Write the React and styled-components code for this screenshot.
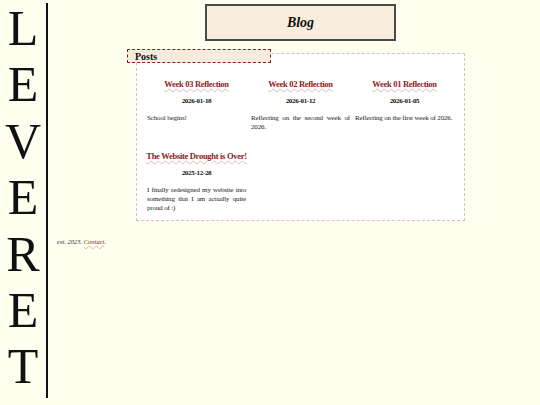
import React from "react";
import styled, { createGlobalStyle } from "styled-components";

const GlobalStyle = createGlobalStyle`
  html, body {
    margin: 0;
    padding: 0;
    background: #fffff0;
    font-family: "Liberation Serif", "Times New Roman", serif;
    color: #111;
  }
`;

const Page = styled.div`
  display: flex;
  align-items: flex-start;
  width: 540px;
  height: 405px;
  overflow: hidden;
`;

const Sidebar = styled.div`
  width: 46px;
  height: 395px;
  margin-top: 3px;
  border-right: 2px solid #111;
  display: flex;
  flex-direction: column;
  align-items: center;
`;

const Letters = styled.div`
  margin-top: -3px;
  display: flex;
  flex-direction: column;
  align-items: center;
`;

const Letter = styled.span`
  font-size: 50px;
  line-height: 56.4px;
  color: #111;
`;

const Main = styled.main`
  flex: 1;
  padding: 4px 0 0 9px;
  display: flex;
  flex-direction: column;
`;

const Column = styled.div`
  padding-left: 4px;
  display: flex;
  flex-direction: column;
  align-items: center;
`;

const Header = styled.header`
  box-sizing: border-box;
  width: 191px;
  height: 37px;
  background: #f8ecdc;
  border: 2px solid #4a4a4a;
  display: flex;
  align-items: center;
  justify-content: center;
`;

const HeaderTitle = styled.h1`
  margin: 0;
  font-size: 14px;
  font-weight: bold;
  font-style: italic;
`;

const PostsSection = styled.section`
  position: relative;
  box-sizing: border-box;
  width: 329px;
  margin-top: 12px;
  background: #fff;
  border: 1px dashed #dcc0c0;
  padding: 25px 9px 7px 10px;
`;

const Tag = styled.h2`
  position: absolute;
  top: -5px;
  left: -10px;
  box-sizing: border-box;
  width: 144px;
  height: 14px;
  margin: 0;
  padding-left: 7px;
  background: #f8ecdc;
  border: 1px dashed #8b2020;
  font-size: 10px;
  font-weight: bold;
  line-height: 13px;
`;

const Grid = styled.div`
  display: grid;
  grid-template-columns: repeat(3, 99px);
  column-gap: 5px;
  row-gap: 19px;
`;

const Post = styled.article`
  display: flex;
  flex-direction: column;
`;

const PostTitle = styled.a`
  align-self: center;
  font-size: 8.5px;
  line-height: 11px;
  font-weight: bold;
  letter-spacing: -0.3px;
  color: #8b1a1a;
  text-decoration: underline wavy rgba(180, 70, 70, 0.35);
  text-decoration-thickness: 1px;
  text-underline-offset: 1px;
  white-space: nowrap;
`;

const PostDate = styled.div`
  margin-top: 7px;
  text-align: center;
  font-size: 7px;
  line-height: 9px;
  font-weight: bold;
  letter-spacing: -0.3px;
`;

const PostBody = styled.p`
  margin: 8px 0 0;
  font-size: 7px;
  line-height: 9px;
  letter-spacing: -0.15px;
  text-align: justify;
  color: #222;
`;

const Footer = styled.footer`
  margin-top: 17px;
  font-size: 6.5px;
  font-style: italic;
  color: #333;
`;

const ContactLink = styled.a`
  color: #8b1a1a;
  text-decoration: underline wavy rgba(180, 70, 70, 0.35);
  text-decoration-thickness: 1px;
`;

const posts = [
  {
    title: "Week 03 Reflection",
    date: "2026-01-18",
    body: "School begins!",
  },
  {
    title: "Week 02 Reflection",
    date: "2026-01-12",
    body: "Reflecting on the second week of 2026.",
  },
  {
    title: "Week 01 Reflection",
    date: "2026-01-05",
    body: "Reflecting on the first week of 2026.",
  },
  {
    title: "The Website Drought is Over!",
    date: "2025-12-28",
    body: "I finally redesigned my website into something that I am actually quite proud of :)",
  },
];

function App() {
  return (
    <>
      <GlobalStyle />
      <Page>
        <Sidebar>
          <Letters>
            {"LEVERET".split("").map((ch, i) => (
              <Letter key={i}>{ch}</Letter>
            ))}
          </Letters>
        </Sidebar>
        <Main>
          <Column>
            <Header>
              <HeaderTitle>Blog</HeaderTitle>
            </Header>
            <PostsSection>
              <Tag>Posts</Tag>
              <Grid>
                {posts.map((p) => (
                  <Post key={p.title}>
                    <PostTitle href="#">{p.title}</PostTitle>
                    <PostDate>{p.date}</PostDate>
                    <PostBody>{p.body}</PostBody>
                  </Post>
                ))}
              </Grid>
            </PostsSection>
          </Column>
          <Footer>
            est. 2023. <ContactLink href="#">Contact</ContactLink>.
          </Footer>
        </Main>
      </Page>
    </>
  );
}

export default App;
